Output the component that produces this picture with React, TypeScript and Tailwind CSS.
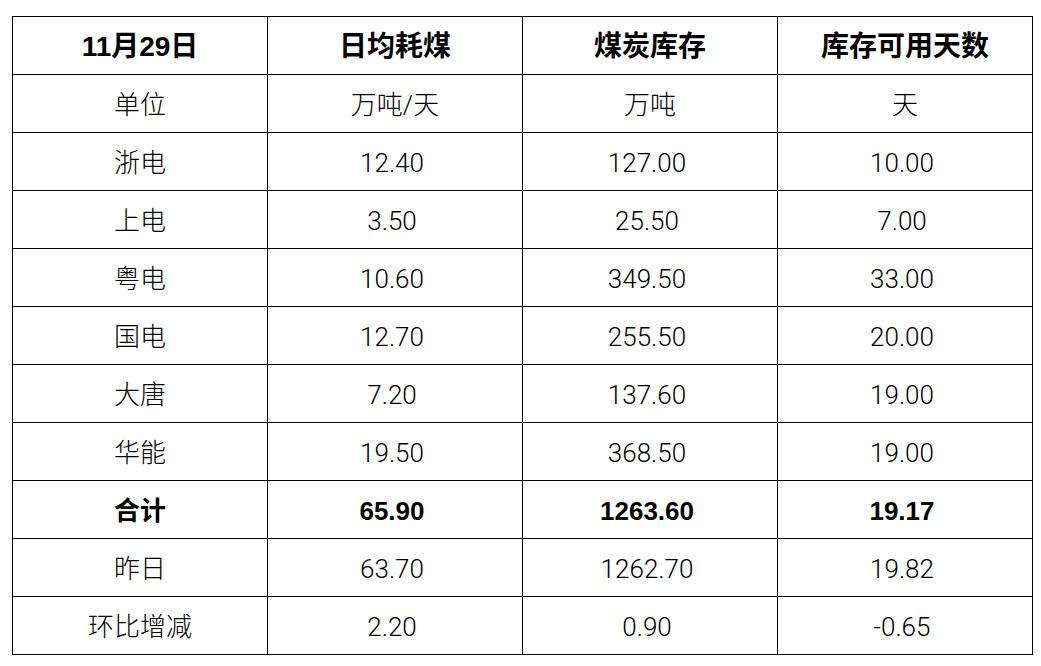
import React from "react";

const header = ["11月29日", "日均耗煤", "煤炭库存", "库存可用天数"];
const rows: { cells: string[]; bold?: boolean }[] = [
  { cells: ["单位", "万吨/天", "万吨", "天"] },
  { cells: ["浙电", "12.40", "127.00", "10.00"] },
  { cells: ["上电", "3.50", "25.50", "7.00"] },
  { cells: ["粤电", "10.60", "349.50", "33.00"] },
  { cells: ["国电", "12.70", "255.50", "20.00"] },
  { cells: ["大唐", "7.20", "137.60", "19.00"] },
  { cells: ["华能", "19.50", "368.50", "19.00"] },
  { cells: ["合计", "65.90", "1263.60", "19.17"], bold: true },
  { cells: ["昨日", "63.70", "1262.70", "19.82"] },
  { cells: ["环比增减", "2.20", "0.90", "-0.65"] },
];

export default function App() {
  return (
    <div className="w-[1041px] h-[666px] bg-white pt-4 pl-3 font-['Liberation_Sans','Noto_Sans_CJK_SC',sans-serif] text-black">
      <div className="grid w-[1021px] grid-cols-[repeat(4,254px)] gap-px bg-black p-px">
        {header.map((h, i) => (
          <div key={"h" + i} className="flex h-[57px] items-center justify-center bg-white pt-[2px] text-[28px] font-bold">
            {h}
          </div>
        ))}
        {rows.map((r, ri) =>
          r.cells.map((c, ci) => {
            const numeric = /^-?[0-9.]+$/.test(c);
            return (
              <div
                key={ri + "-" + ci}
                className={
                  "flex h-[57px] items-center justify-center bg-white pt-[3px] text-[26px] " +
                  (numeric ? "pr-[6px] " : "") +
                  (r.bold
                    ? "font-bold"
                    : "font-['Roboto','Noto_Sans_CJK_SC',sans-serif] font-light")
                }
              >
                {c}
              </div>
            );
          })
        )}
      </div>
    </div>
  );
}
